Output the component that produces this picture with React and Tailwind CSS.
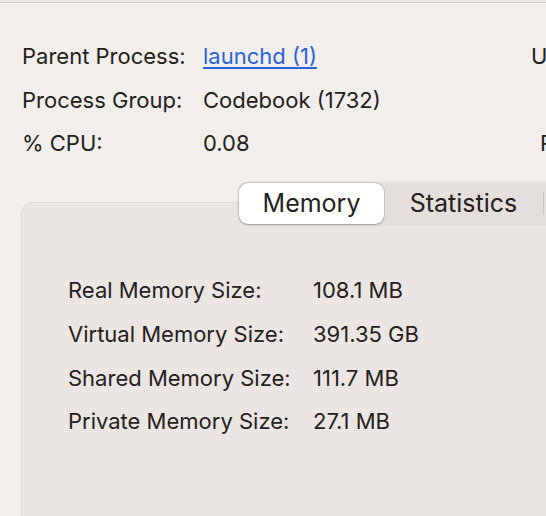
export default function App() {
  const info = [
    { label: "Parent Process:", value: "launchd (1)", link: true, right: "User:", rightX: "ml-[148px]" },
    { label: "Process Group:", value: "Codebook (1732)" },
    { label: "% CPU:", value: "0.08", right: "Recent hangs:", rightX: "ml-[157px]" },
  ];
  const memory = [
    ["Real Memory Size:", "108.1 MB"],
    ["Virtual Memory Size:", "391.35 GB"],
    ["Shared Memory Size:", "111.7 MB"],
    ["Private Memory Size:", "27.1 MB"],
  ];
  return (
    <div
      className="w-[546px] h-[516px] overflow-hidden bg-[#f2eeeb] text-[#242120] flex flex-col"
      style={{ fontFamily: "Inter, 'Noto Sans', sans-serif" }}
    >
      <div className="h-[2px] bg-[#ebe6e3] shrink-0" />
      <div className="h-px bg-[#cfcac7] shrink-0" />

      {/* general process info */}
      <div className="pt-[32px] pl-[22px] flex flex-col text-[22px]">
        {info.map((r) => (
          <div key={r.label} className="h-[43.6px] flex items-center whitespace-nowrap">
            <span className="w-[181px] shrink-0">{r.label}</span>
            <span className={r.link ? "text-[#2a62d6] underline underline-offset-[3px] w-[180px] shrink-0" : "w-[180px] shrink-0"}>
              {r.value}
            </span>
            {r.right && <span className={r.rightX}>{r.right}</span>}
          </div>
        ))}
      </div>

      {/* tabbed panel */}
      <div className="mt-[16px] flex flex-col flex-1 min-h-0">
        <div className="relative z-10 pl-[238px] flex whitespace-nowrap">
          <div className="flex items-center bg-[#e4dfdc] rounded-l-[10px] p-px h-[43px] text-[25px] shadow-[0_0_0_0.5px_rgba(0,0,0,0.06)]">
            <div className="w-[145px] h-[41px] bg-white rounded-[9px] flex items-center justify-center shadow-[0_0.5px_2px_rgba(0,0,0,0.25),0_0_0_0.5px_rgba(0,0,0,0.12)]">
              Memory
            </div>
            <div className="w-[159px] h-[41px] flex items-center justify-center">Statistics</div>
            <div className="w-px h-[23px] bg-[#c9c4c1]" />
            <div className="w-[140px] h-[41px] flex items-center justify-center">Open Files</div>
          </div>
        </div>
        <div className="-mt-[23px] ml-[21px] flex-1 bg-[#ebe6e3] border-l border-t border-[#e0dbd8] rounded-tl-[12px] pt-[66px] pl-[46px] text-[22px]">
          {memory.map(([k, v]) => (
            <div key={k} className="h-[43.7px] flex items-center whitespace-nowrap">
              <span className="w-[245px] shrink-0">{k}</span>
              <span>{v}</span>
            </div>
          ))}
        </div>
      </div>
    </div>
  );
}
